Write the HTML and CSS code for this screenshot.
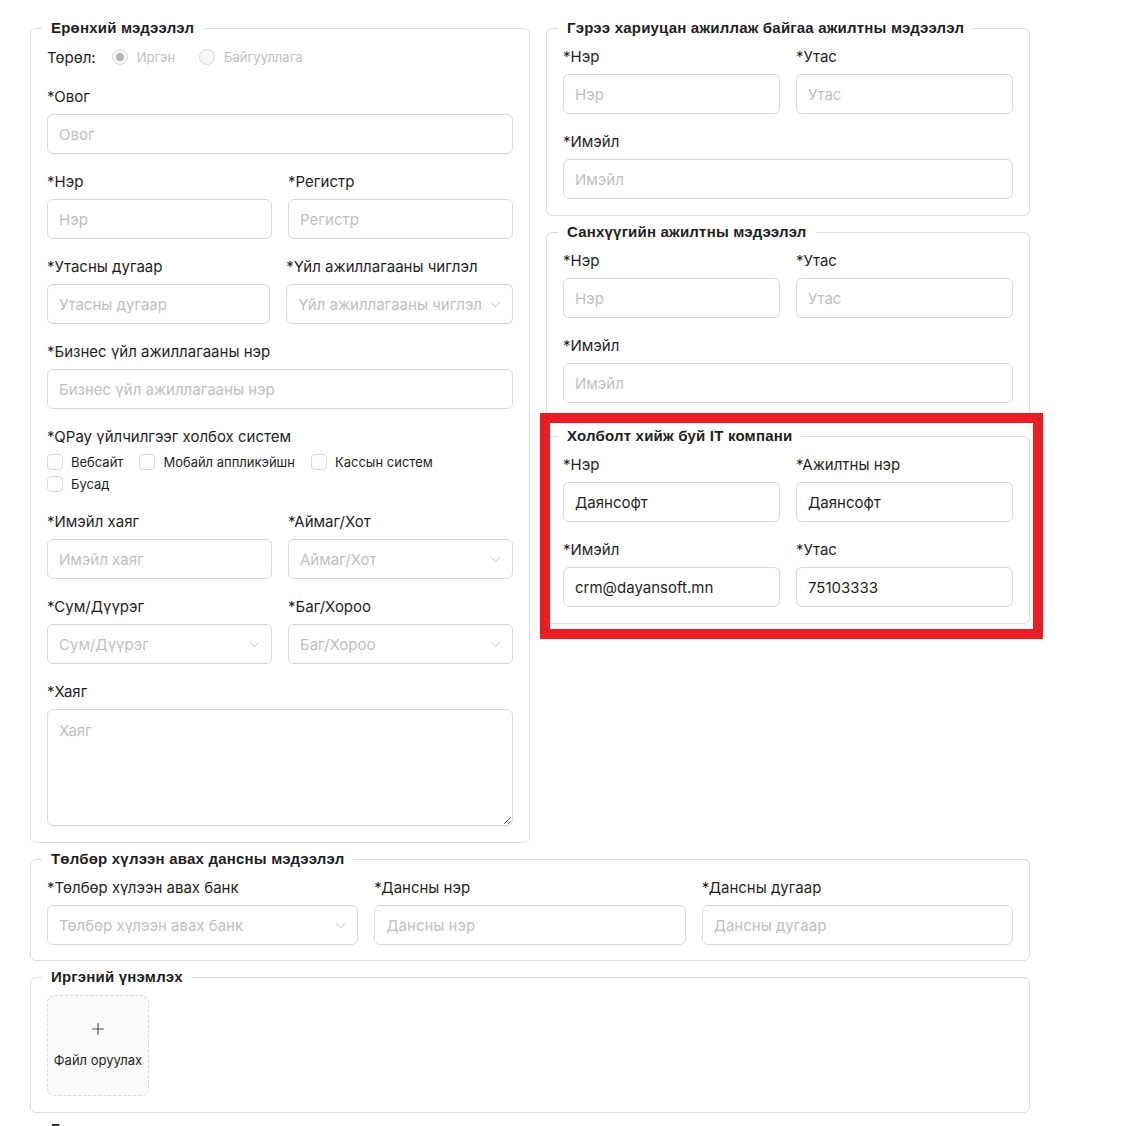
FILE: index.html
```html
<!DOCTYPE html>
<html lang="mn">
<head>
<meta charset="utf-8">
<title>Form</title>
<link rel="stylesheet" href="styles.css">
</head>
<body>
<div class="page">
  <div class="top-grid">
    <fieldset class="box">
      <legend>Ерөнхий мэдээлэл</legend>
      <div class="item type-row">
        <span class="type-label">Төрөл:</span>
        <span class="radio checked"><span class="dot"></span></span><span class="radio-text">Иргэн</span>
        <span class="radio"></span><span class="radio-text">Байгууллага</span>
      </div>
      <div class="item">
        <label>*Овог</label>
        <input class="inp" placeholder="Овог">
      </div>
      <div class="row2">
        <div class="item"><label>*Нэр</label><input class="inp" placeholder="Нэр"></div>
        <div class="item"><label>*Регистр</label><input class="inp" placeholder="Регистр"></div>
      </div>
      <div class="row2">
        <div class="item"><label>*Утасны дугаар</label><input class="inp" placeholder="Утасны дугаар"></div>
        <div class="item"><label>*Үйл ажиллагааны чиглэл</label>
          <div class="sel"><span>Үйл ажиллагааны чиглэл</span><svg class="chev" viewBox="0 0 12 8"><path d="M1 1.5 L6 6.5 L11 1.5"/></svg></div>
        </div>
      </div>
      <div class="item">
        <label>*Бизнес үйл ажиллагааны нэр</label>
        <input class="inp" placeholder="Бизнес үйл ажиллагааны нэр">
      </div>
      <div class="item item-checks">
        <label>*QPay үйлчилгээг холбох систем</label>
        <div class="checks">
          <div class="check-line">
            <span class="cb"></span><span class="cb-text">Вебсайт</span>
            <span class="cb"></span><span class="cb-text">Мобайл аппликэйшн</span>
            <span class="cb"></span><span class="cb-text">Кассын систем</span>
          </div>
          <div class="check-line">
            <span class="cb"></span><span class="cb-text">Бусад</span>
          </div>
        </div>
      </div>
      <div class="row2">
        <div class="item"><label>*Имэйл хаяг</label><input class="inp" placeholder="Имэйл хаяг"></div>
        <div class="item"><label>*Аймаг/Хот</label>
          <div class="sel"><span>Аймаг/Хот</span><svg class="chev" viewBox="0 0 12 8"><path d="M1 1.5 L6 6.5 L11 1.5"/></svg></div>
        </div>
      </div>
      <div class="row2">
        <div class="item"><label>*Сум/Дүүрэг</label>
          <div class="sel"><span>Сум/Дүүрэг</span><svg class="chev" viewBox="0 0 12 8"><path d="M1 1.5 L6 6.5 L11 1.5"/></svg></div>
        </div>
        <div class="item"><label>*Баг/Хороо</label>
          <div class="sel"><span>Баг/Хороо</span><svg class="chev" viewBox="0 0 12 8"><path d="M1 1.5 L6 6.5 L11 1.5"/></svg></div>
        </div>
      </div>
      <div class="item">
        <label>*Хаяг</label>
        <textarea class="ta" placeholder="Хаяг"></textarea>
      </div>
    </fieldset>

    <div class="right-col">
      <fieldset class="box">
        <legend>Гэрээ хариуцан ажиллаж байгаа ажилтны мэдээлэл</legend>
        <div class="row2">
          <div class="item"><label>*Нэр</label><input class="inp" placeholder="Нэр"></div>
          <div class="item"><label>*Утас</label><input class="inp" placeholder="Утас"></div>
        </div>
        <div class="item"><label>*Имэйл</label><input class="inp" placeholder="Имэйл"></div>
      </fieldset>

      <fieldset class="box">
        <legend>Санхүүгийн ажилтны мэдээлэл</legend>
        <div class="row2">
          <div class="item"><label>*Нэр</label><input class="inp" placeholder="Нэр"></div>
          <div class="item"><label>*Утас</label><input class="inp" placeholder="Утас"></div>
        </div>
        <div class="item"><label>*Имэйл</label><input class="inp" placeholder="Имэйл"></div>
      </fieldset>

      <div class="hl-wrap">
        <fieldset class="box">
          <legend>Холболт хийж буй IT компани</legend>
          <div class="row2">
            <div class="item"><label>*Нэр</label><input class="inp" value="Даянсофт"></div>
            <div class="item"><label>*Ажилтны нэр</label><input class="inp" value="Даянсофт"></div>
          </div>
          <div class="row2">
            <div class="item"><label>*Имэйл</label><input class="inp" value="crm@dayansoft.mn"></div>
            <div class="item"><label>*Утас</label><input class="inp" value="75103333"></div>
          </div>
        </fieldset>
        <div class="hl"></div>
      </div>
    </div>
  </div>

  <fieldset class="box bank">
    <legend>Төлбөр хүлээн авах дансны мэдээлэл</legend>
    <div class="row3">
      <div class="item"><label>*Төлбөр хүлээн авах банк</label>
        <div class="sel"><span>Төлбөр хүлээн авах банк</span><svg class="chev" viewBox="0 0 12 8"><path d="M1 1.5 L6 6.5 L11 1.5"/></svg></div>
      </div>
      <div class="item"><label>*Дансны нэр</label><input class="inp" placeholder="Дансны нэр"></div>
      <div class="item"><label>*Дансны дугаар</label><input class="inp" placeholder="Дансны дугаар"></div>
    </div>
  </fieldset>

  <fieldset class="box">
    <legend>Иргэний үнэмлэх</legend>
    <div class="upload">
      <svg class="plus" viewBox="0 0 16 16"><path d="M8 1.5 V14.5 M1.5 8 H14.5"/></svg>
      <span>Файл оруулах</span>
    </div>
  </fieldset>

  <fieldset class="box">
    <legend>Гэрчилгээ</legend>
    <div class="upload">
      <svg class="plus" viewBox="0 0 16 16"><path d="M8 1.5 V14.5 M1.5 8 H14.5"/></svg>
      <span>Файл оруулах</span>
    </div>
  </fieldset>
</div>
</body>
</html>
```

FILE: styles.css
```css
* { box-sizing: border-box; }

body {
  margin: 0;
  background: #ffffff;
  font-family: Inter, "Noto Sans", sans-serif;
  color: #1f1f1f;
}

.page {
  width: 1030px;
  padding: 17px 0 40px 30px;
}

.top-grid {
  display: grid;
  grid-template-columns: 500px 484px;
  column-gap: 16px;
  align-items: start;
}

.right-col {
  display: flex;
  flex-direction: column;
  gap: 5px;
}

fieldset.box {
  margin: 0 0 5px 0;
  min-width: 0;
  border: 1px solid #dcdce6;
  border-radius: 6px;
  padding: 7px 16px 16px 16px;
}

.right-col fieldset.box {
  margin-bottom: 0;
  padding-top: 6px;
}

fieldset.box.bank {
  padding-top: 6px;
  padding-bottom: 15px;
}

legend {
  font-family: "Liberation Sans", Arial, sans-serif;
  font-weight: bold;
  font-size: 15px;
  line-height: 22px;
  letter-spacing: 0.2px;
  color: #1f1f1f;
  padding: 0 9px;
  margin-left: -5px;
}

.item { margin-bottom: 16px; }
.type-row.item { margin-bottom: 17px; }
.item-checks.item { margin-bottom: 15px; }
fieldset.box > .item:last-child,
fieldset.box > .row2:last-child .item,
fieldset.box > .row3 .item { margin-bottom: 0; }

label {
  display: block;
  font-size: 15px;
  line-height: 22px;
  padding-top: 1px;
  padding-bottom: 6px;
  color: #1f1f1f;
}

.row2 {
  display: grid;
  grid-template-columns: 1fr 1fr;
  column-gap: 16px;
}

.row3 {
  display: grid;
  grid-template-columns: 1fr 1fr 1fr;
  column-gap: 16px;
}

.inp {
  display: block;
  width: 100%;
  height: 40px;
  border: 1px solid #d9d9d9;
  border-radius: 6px;
  padding: 0 11px;
  font-family: Inter, "Noto Sans", sans-serif;
  font-size: 15px;
  color: #1f1f1f;
  background: #fff;
  outline: none;
}
.inp::placeholder { color: #bfbfbf; }

.sel {
  display: flex;
  align-items: center;
  justify-content: space-between;
  height: 40px;
  border: 1px solid #d9d9d9;
  border-radius: 6px;
  padding: 0 11px;
  font-size: 15px;
  color: #bfbfbf;
  background: #fff;
  white-space: nowrap;
  overflow: hidden;
}
.sel span { overflow: hidden; text-overflow: clip; }

.chev {
  width: 11px;
  height: 7px;
  flex: none;
  margin-left: 8px;
  fill: none;
  stroke: #bfbfbf;
  stroke-width: 1.1;
}

.ta {
  display: block;
  width: 100%;
  height: 117px;
  border: 1px solid #d9d9d9;
  border-radius: 6px;
  padding: 10px 11px;
  font-family: Inter, "Noto Sans", sans-serif;
  font-size: 15px;
  line-height: 22px;
  color: #1f1f1f;
  resize: vertical;
  outline: none;
}
.ta::placeholder { color: #bfbfbf; }

/* type row */
.type-row {
  display: flex;
  align-items: center;
  height: 22px;
  font-size: 15px;
}
.type-label { margin-right: 16px; color: #1f1f1f; }
.radio {
  width: 16px;
  height: 16px;
  border-radius: 50%;
  border: 1px solid #d9d9d9;
  background: #f5f5f5;
  display: inline-flex;
  align-items: center;
  justify-content: center;
  flex: none;
}
.radio .dot {
  width: 8px;
  height: 8px;
  border-radius: 50%;
  background: #b3b3b3;
}
.radio-text {
  font-size: 13px;
  color: #bfbfbf;
  margin-left: 9px;
  margin-right: 24px;
}

/* checkboxes */
.checks {
  display: flex;
  flex-direction: column;
  margin-top: -3px;
}
.check-line {
  display: flex;
  align-items: center;
  height: 22px;
}
.cb {
  width: 16px;
  height: 16px;
  border: 1px solid #d9d9d9;
  border-radius: 4px;
  background: #fff;
  flex: none;
}
.cb-text {
  font-size: 13px;
  margin-left: 8px;
  margin-right: 16px;
  color: #1f1f1f;
}

/* highlight */
.hl-wrap { position: relative; }
.hl {
  position: absolute;
  left: -6px;
  top: -12px;
  right: -13px;
  bottom: -15px;
  border: 10px solid #ec1c24;
  pointer-events: none;
}

/* upload */
.upload {
  width: 102px;
  height: 101px;
  border: 1px dashed #d9d9d9;
  border-radius: 8px;
  background: #fafafa;
  display: flex;
  flex-direction: column;
  align-items: center;
  justify-content: center;
  gap: 15px;
  font-size: 13px;
  line-height: 18px;
  color: #1f1f1f;
}
.plus {
  width: 14px;
  height: 14px;
  fill: none;
  stroke: #4d4d4d;
  stroke-width: 1.3;
}
```
